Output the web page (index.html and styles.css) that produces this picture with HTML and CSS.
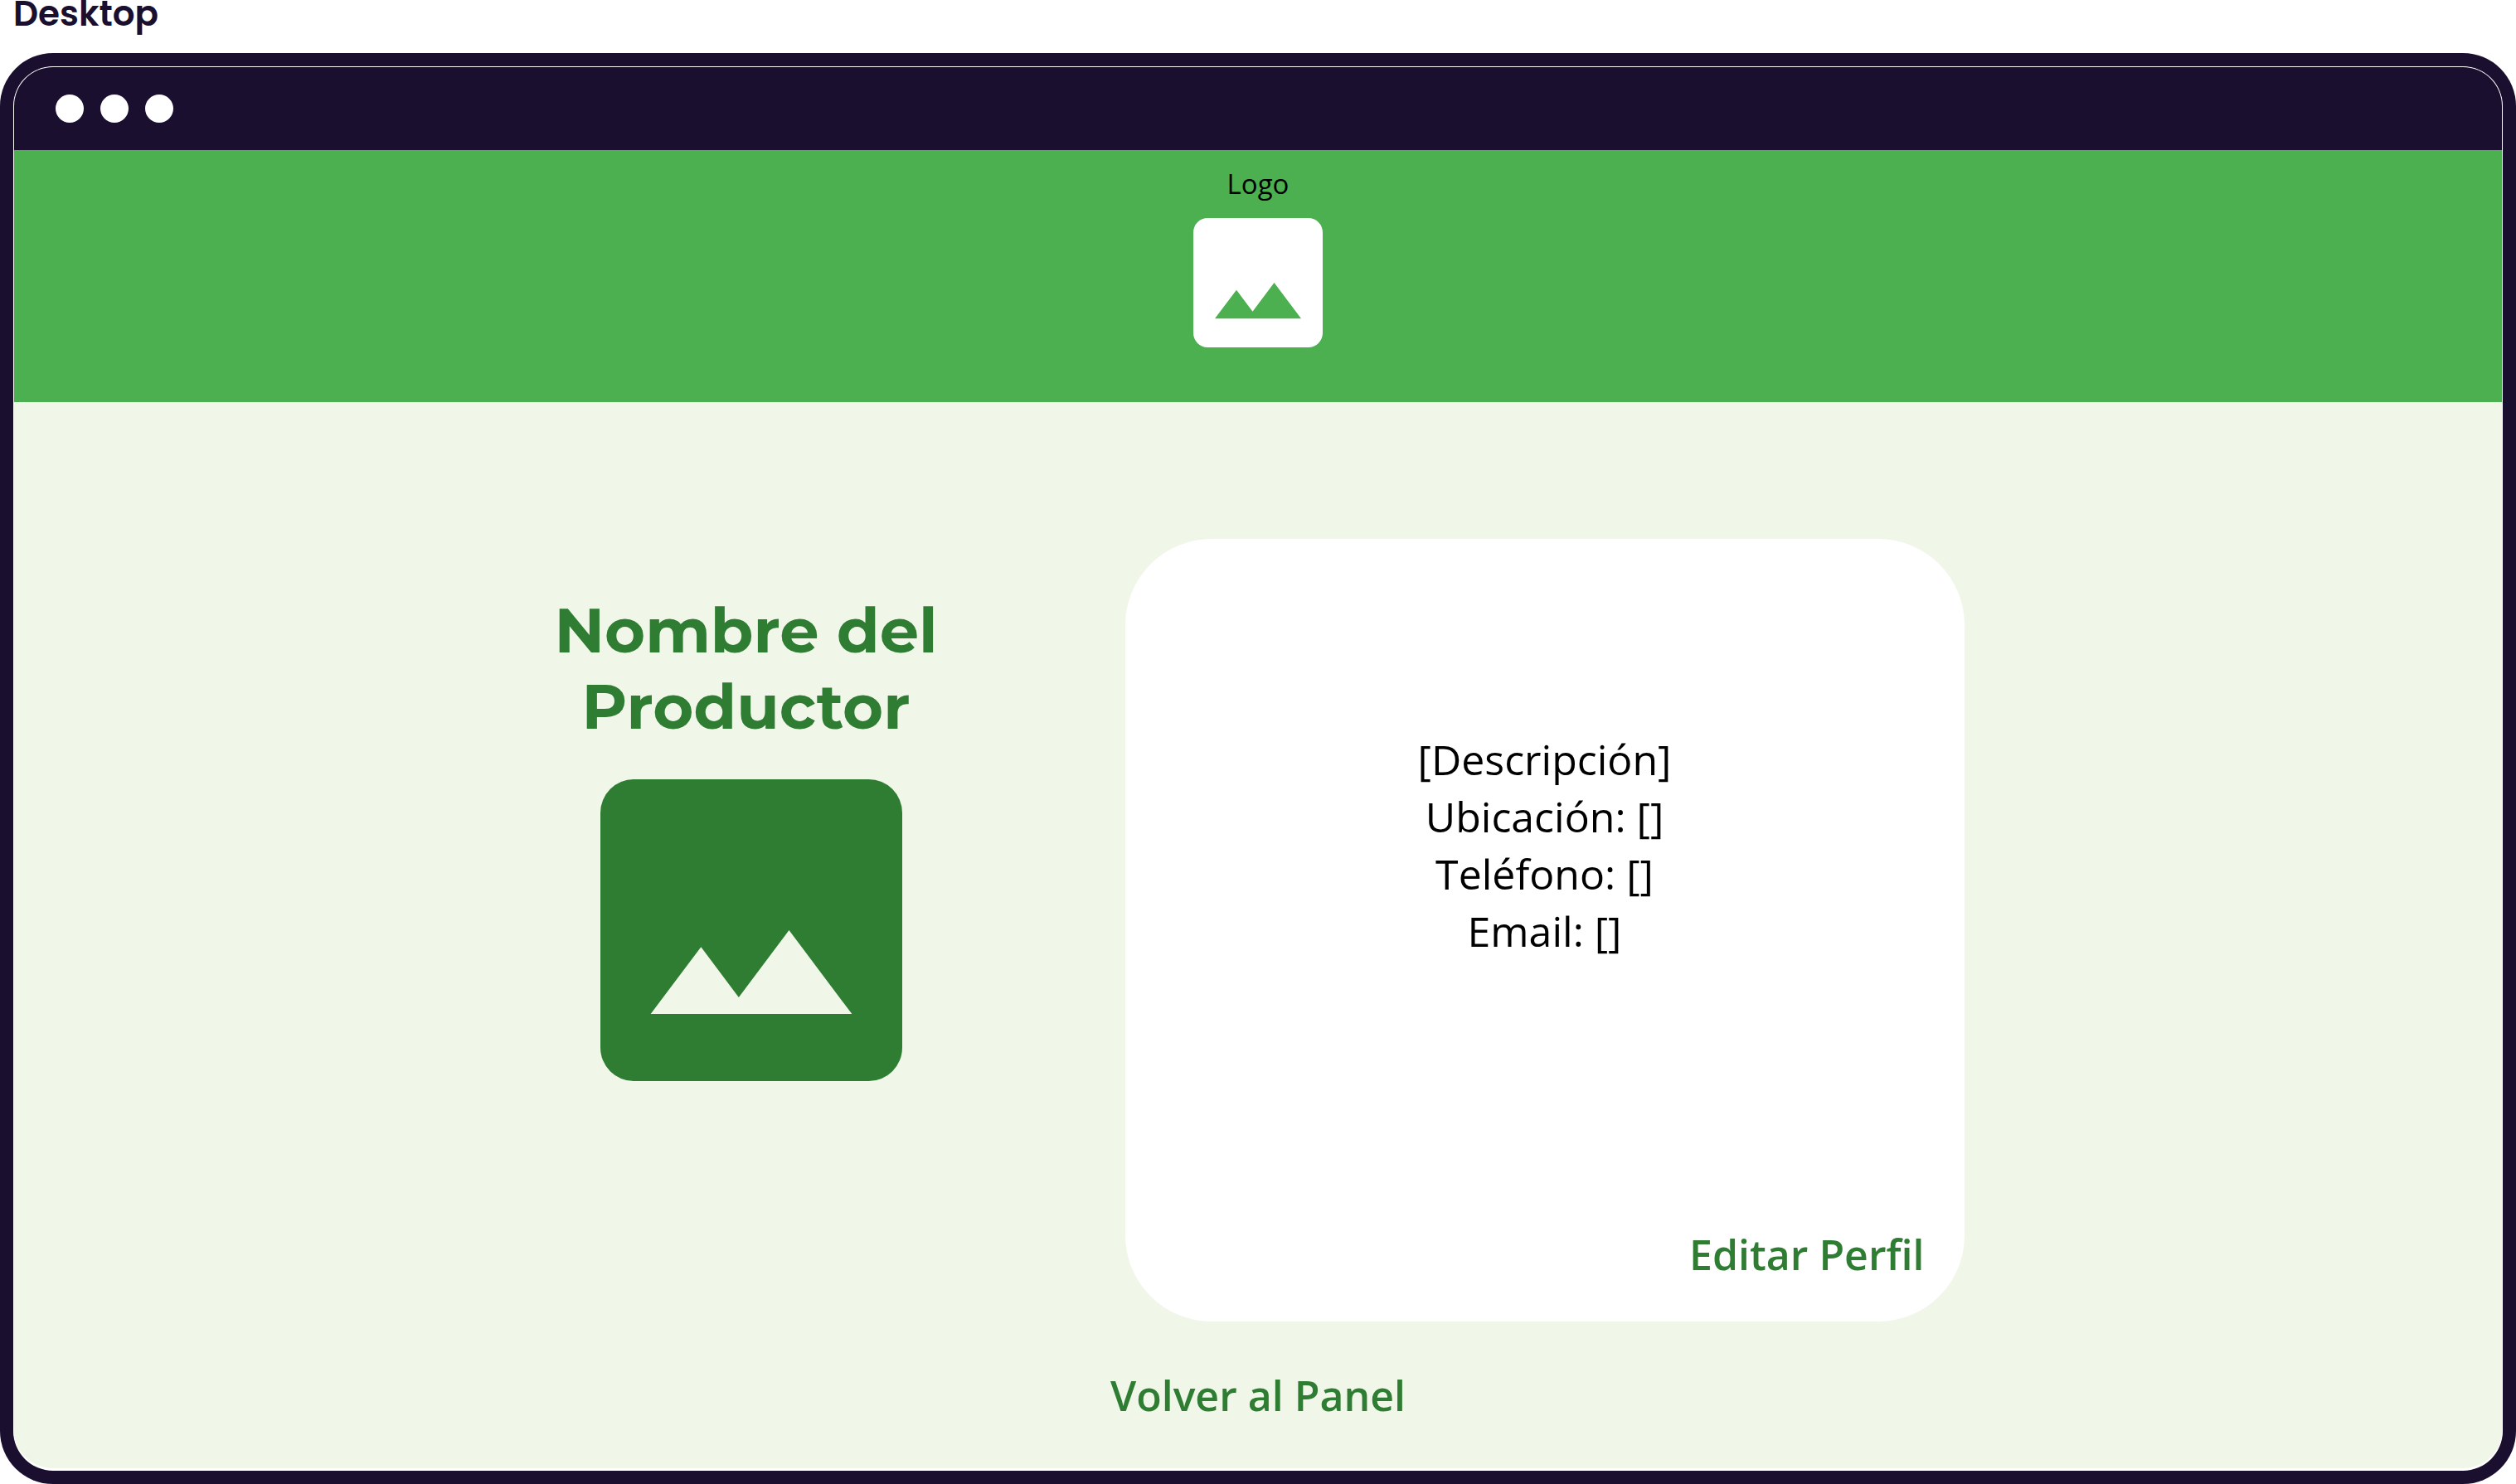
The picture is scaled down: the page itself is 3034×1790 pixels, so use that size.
FILE: index.html
```html
<!DOCTYPE html>
<html lang="es">
<head>
  <meta charset="utf-8">
  <meta name="viewport" content="width=device-width, initial-scale=1">
  <title>Perfil del Productor</title>
  <link rel="stylesheet" href="styles.css">
</head>
<body class="page">
  <p class="device-label">Desktop</p>
  <div class="frame">
    <div class="screen">
      <div class="window-bar">
        <span class="dot"></span>
        <span class="dot"></span>
        <span class="dot"></span>
      </div>
      <header class="site-header">
        <p class="logo-label">Logo</p>
        <svg class="logo-image" viewBox="0 0 18 18" role="img" aria-label="Logo">
          <path fill="currentColor" fill-rule="evenodd" d="M2 0H16A2 2 0 0 1 18 2V16A2 2 0 0 1 16 18H2A2 2 0 0 1 0 16V2A2 2 0 0 1 2 0ZM3 14H15L11.250 9L8.250 13L6 10Z"/>
        </svg>
      </header>
      <main class="content">
        <div class="profile">
          <section class="producer">
            <h1 class="producer-name">Nombre del Productor</h1>
            <svg class="producer-image" viewBox="0 0 18 18" role="img" aria-label="Foto del productor">
              <path fill="currentColor" fill-rule="evenodd" d="M2 0H16A2 2 0 0 1 18 2V16A2 2 0 0 1 16 18H2A2 2 0 0 1 0 16V2A2 2 0 0 1 2 0ZM3 14H15L11.250 9L8.250 13L6 10Z"/>
            </svg>
          </section>
          <section class="card">
            <div class="details">
              <p class="detail">[Descripción]</p>
              <p class="detail">Ubicación: []</p>
              <p class="detail">Teléfono: []</p>
              <p class="detail">Email: []</p>
            </div>
            <a class="link link-edit" href="#editar">Editar Perfil</a>
          </section>
        </div>
        <a class="link" href="#panel">Volver al Panel</a>
      </main>
    </div>
  </div>
</body>
</html>
```

FILE: styles.css
```css
:root {
  --ink: #1b0f30;
  --green: #4caf50;
  --green-dark: #2e7d32;
  --mist: #f0f6e8;
}

* {
  box-sizing: border-box;
}

.page {
  display: flex;
  flex-direction: column;
  min-height: 100vh;
  margin: 0;
  background: #fff;
  color: #000;
  font-family: "Open Sans", "Noto Sans", sans-serif;
}

.device-label {
  height: 64px;
  margin: 0;
  padding-left: 16px;
  color: var(--ink);
  font: 600 42px/34px Poppins, Inter, sans-serif;
}

.frame {
  display: flex;
  flex: 1;
  padding: 16px;
  border-radius: 64px;
  background: var(--ink);
}

.screen {
  display: flex;
  flex: 1;
  flex-direction: column;
  overflow: hidden;
  border: 1px solid #fff;
  border-bottom-width: 3px;
  border-radius: 48px;
  background: var(--mist);
}

.window-bar {
  display: flex;
  align-items: center;
  gap: 20px;
  height: 100px;
  padding-left: 50px;
  background: var(--ink);
}

.dot {
  width: 34px;
  height: 34px;
  border-radius: 50%;
  background: #fff;
}

.site-header {
  display: flex;
  flex-direction: column;
  align-items: center;
  gap: 18px;
  padding: 18px 0 66px;
  background: var(--green);
}

.logo-label {
  margin: 0;
  font-size: 33px;
  line-height: 46px;
}

.logo-image {
  width: 156px;
  height: 156px;
  color: #fff;
}

.content {
  display: flex;
  flex: 1;
  flex-direction: column;
  align-items: center;
  gap: 55px;
  padding: 165px 16px 52px;
}

.profile {
  display: flex;
  justify-content: center;
  gap: 215px;
  width: 100%;
  padding-right: 8px;
}

.producer {
  display: flex;
  flex-direction: column;
  align-items: center;
  gap: 42px;
  width: 484px;
  padding-top: 64px;
}

.producer-name {
  margin: 0;
  color: var(--green-dark);
  font: 700 75px/92px Montserrat, Inter, sans-serif;
  text-align: center;
}

.producer-image {
  width: 364px;
  height: 364px;
  margin-left: 12px;
  color: var(--green-dark);
}

.card {
  display: flex;
  flex: 0 1 1012px;
  flex-direction: column;
  justify-content: space-between;
  min-height: 944px;
  padding: 232px 48px 46px;
  border-radius: 104px;
  background: #fff;
}

.details {
  font-size: 50px;
  line-height: 69px;
  text-align: center;
}

.detail {
  margin: 0;
}

.link {
  color: var(--green-dark);
  font-size: 50px;
  font-weight: 600;
  line-height: 69px;
  text-decoration: none;
}

.link-edit {
  align-self: flex-end;
}
```
